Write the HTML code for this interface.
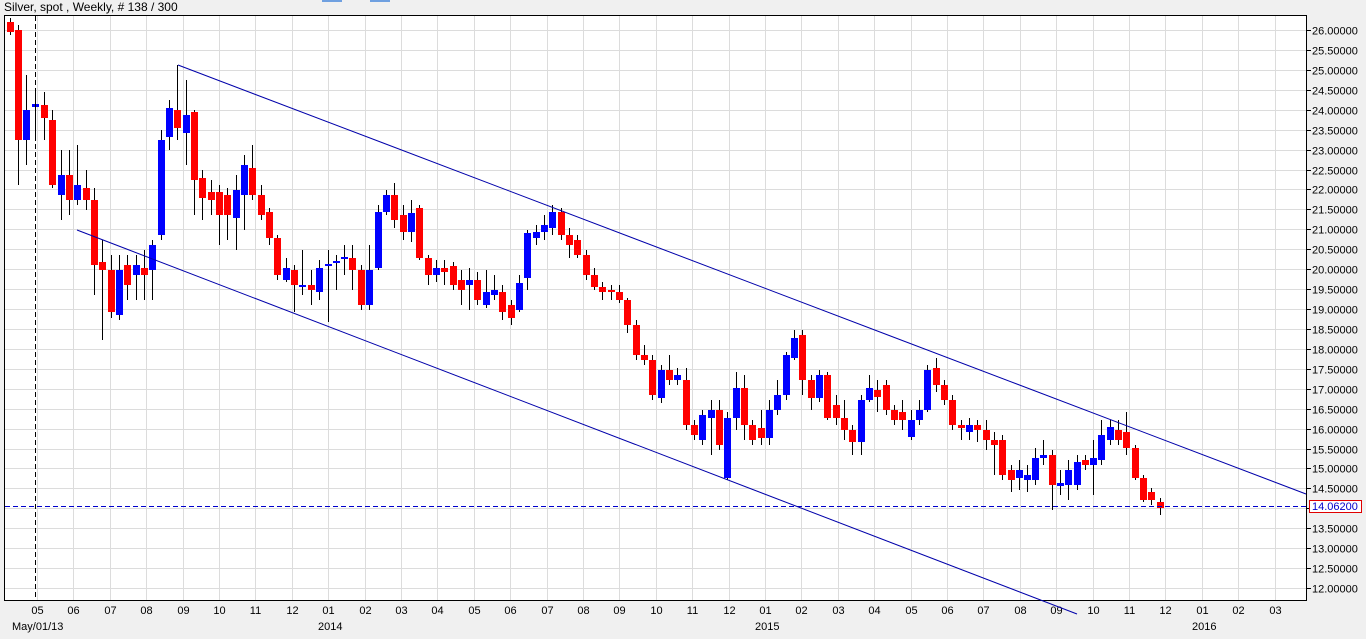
<!DOCTYPE html>
<html><head><meta charset="utf-8"><style>
html,body{margin:0;padding:0;background:#f0f0f0;width:1366px;height:639px;overflow:hidden;font-family:"Liberation Sans",sans-serif}
svg{position:absolute;left:0;top:0}
</style></head><body>
<svg id="s" width="1366" height="639" xmlns="http://www.w3.org/2000/svg" font-family="Liberation Sans, sans-serif"></svg>
<script>
var s='';
s+='<rect x="0" y="0" width="1366" height="639" fill="#f0f0f0"/>';
s+='<rect x="322" y="0" width="20" height="2" fill="#6fa0e0"/><rect x="370" y="0" width="20" height="2" fill="#6fa0e0"/>';
s+='<text x="4" y="11" font-size="12" fill="#000">Silver, spot , Weekly, # 138 / 300</text>';
s+='<rect x="4.5" y="15.5" width="1302" height="585" fill="#fff" stroke="#000" stroke-width="1"/>';
function Y(p){return 30+(26-p)*39.86;}
for(var i=0;i<=28;i++){var p=26-i*0.5;var y=Math.round(Y(p))+0.5;
 s+='<line x1="5" x2="1306" y1="'+y+'" y2="'+y+'" stroke="#dcdcdc"/>';
 s+='<line x1="1306" x2="1311" y1="'+y+'" y2="'+y+'" stroke="#000"/>';
 if(Math.abs(p-14)>0.01) s+='<text x="1312" y="'+(y+4)+'" font-size="11" fill="#000">'+p.toFixed(5)+'</text>';}
var m=['05','06','07','08','09','10','11','12','01','02','03','04','05','06','07','08','09','10','11','12','01','02','03','04','05','06','07','08','09','10','11','12','01','02','03'];
for(var i=0;i<m.length;i++){var x=Math.round(37+i*36.4)+0.5;
 s+='<line x1="'+x+'" x2="'+x+'" y1="16" y2="600" stroke="#dcdcdc"/>';}
var c=[[10,22,32,18,35,'r'],[18,30,140,25,185,'r'],[26,110,140,75,165,'b'],[35,104,107,88,140,'b'],[44,105,118,92,140,'r'],[52,120,185,110,188,'r'],[61,175,195,150,220,'b'],[69,175,200,150,215,'r'],[77,185,200,145,205,'b'],[86,188,200,170,210,'r'],[94,200,265,188,295,'r'],[102,262,270,240,340,'r'],[111,270,312,255,318,'r'],[119,270,315,255,320,'b'],[127,265,285,255,300,'r'],[136,265,275,255,300,'b'],[144,268,275,250,300,'r'],[152,245,270,240,300,'b'],[161,140,235,130,240,'b'],[169,108,137,100,150,'b'],[177,110,128,65,140,'r'],[186,115,133,80,165,'b'],[194,112,180,110,215,'r'],[202,178,198,170,220,'r'],[211,192,200,180,215,'r'],[219,192,215,185,245,'r'],[227,195,215,188,240,'r'],[236,190,218,175,250,'b'],[244,165,195,155,230,'b'],[252,168,195,145,200,'r'],[261,195,215,185,220,'r'],[269,212,238,208,245,'r'],[277,238,275,235,280,'r'],[286,268,280,258,282,'b'],[294,270,285,265,312,'r'],[302,285,287,250,295,'b'],[311,285,290,270,305,'r'],[319,268,292,260,300,'b'],[328,264,266,250,322,'b'],[336,261,263,255,290,'b'],[344,257,259,245,275,'b'],[352,258,270,245,290,'r'],[361,270,305,265,310,'r'],[369,270,305,245,310,'b'],[378,212,268,205,270,'b'],[386,195,212,190,215,'b'],[394,195,220,183,228,'r'],[403,215,232,205,240,'r'],[411,213,232,200,242,'b'],[419,208,258,205,260,'r'],[428,258,275,255,285,'r'],[436,268,275,260,282,'b'],[444,268,272,260,285,'r'],[453,266,285,262,290,'r'],[461,280,290,270,305,'r'],[469,280,285,268,310,'b'],[477,280,300,272,305,'r'],[486,292,305,270,308,'b'],[494,290,295,275,300,'b'],[502,292,312,285,320,'r'],[511,305,318,300,325,'r'],[519,283,310,275,312,'b'],[527,233,278,230,290,'b'],[536,232,238,225,245,'b'],[544,225,232,215,240,'b'],[552,212,228,205,235,'b'],[561,212,235,208,240,'r'],[569,235,245,228,258,'r'],[577,240,255,235,258,'r'],[586,255,275,250,280,'r'],[594,275,287,268,290,'r'],[602,287,292,282,300,'r'],[611,290,292,285,300,'r'],[619,292,300,285,303,'r'],[627,300,325,298,333,'r'],[636,325,355,320,360,'r'],[644,355,360,345,365,'r'],[652,360,395,355,400,'r'],[661,370,398,365,403,'b'],[669,370,380,355,385,'r'],[677,375,380,368,385,'b'],[686,380,425,368,430,'r'],[694,425,435,420,440,'r'],[702,415,440,410,445,'b'],[711,410,418,400,455,'b'],[719,410,445,400,450,'r'],[727,418,478,412,480,'b'],[736,388,418,372,430,'b'],[744,388,425,375,440,'r'],[752,425,440,420,445,'r'],[761,428,438,410,445,'r'],[769,410,438,400,445,'b'],[777,395,410,380,415,'b'],[786,355,395,352,400,'b'],[794,338,358,330,360,'b'],[802,335,380,330,395,'r'],[811,380,398,375,410,'r'],[819,375,398,370,402,'b'],[827,375,418,372,420,'r'],[836,405,418,395,425,'r'],[844,418,430,400,440,'r'],[852,430,442,425,455,'r'],[861,400,442,395,455,'b'],[869,388,400,375,402,'b'],[877,390,397,380,412,'r'],[886,385,410,380,415,'r'],[894,410,420,405,425,'r'],[902,412,420,400,430,'r'],[911,420,437,410,440,'b'],[919,410,420,400,425,'b'],[927,370,410,365,412,'b'],[936,368,385,358,392,'r'],[944,385,400,380,405,'r'],[952,400,425,395,430,'r'],[961,425,428,420,440,'r'],[969,425,432,418,440,'b'],[977,425,430,420,442,'r'],[986,430,440,420,450,'r'],[994,440,445,432,475,'r'],[1002,440,475,435,480,'r'],[1011,470,480,465,492,'r'],[1019,470,478,460,490,'b'],[1027,475,480,465,492,'b'],[1035,458,480,448,485,'b'],[1043,455,458,440,465,'b'],[1052,455,485,450,510,'r'],[1060,483,486,470,495,'b'],[1068,470,485,460,500,'b'],[1077,462,485,455,490,'b'],[1085,460,465,455,470,'r'],[1093,458,465,440,495,'b'],[1101,435,460,420,465,'b'],[1110,427,440,420,445,'b'],[1118,430,440,420,445,'r'],[1126,432,448,412,455,'r'],[1135,448,478,445,480,'r'],[1143,478,500,475,502,'r'],[1151,492,500,488,505,'r'],[1160,502,508,498,515,'r']];
for(var i=0;i<c.length;i++){var k=c[i];var col=k[5]=='r'?'#ff0000':'#0000ff';
 s+='<line x1="'+(k[0]+0.5)+'" x2="'+(k[0]+0.5)+'" y1="'+k[3]+'" y2="'+k[4]+'" stroke="#000"/>';
 var h=Math.max(2,k[2]-k[1]);
 s+='<rect x="'+(k[0]-3)+'" y="'+k[1]+'" width="7" height="'+h+'" fill="'+col+'"/>';}
s+='<line x1="178" y1="65" x2="1306" y2="494" stroke="#0000aa" stroke-width="1"/>';
s+='<line x1="5" x2="1306" y1="506.5" y2="506.5" stroke="#0000cc" stroke-dasharray="5,3"/>';
s+='<line x1="35.5" x2="35.5" y1="16" y2="600" stroke="#000" stroke-dasharray="5,3"/>';
s+='<rect x="0" y="601" width="1366" height="38" fill="#f0f0f0"/>';
for(var i=0;i<m.length;i++){var x=Math.round(37+i*36.4)+0.5;s+='<text x="'+x+'" y="614" font-size="11" text-anchor="middle" fill="#000">'+m[i]+'</text>';}
s+='<text x="12" y="630" font-size="11">May/01/13</text><text x="318" y="630" font-size="11">2014</text><text x="755" y="630" font-size="11">2015</text><text x="1192" y="630" font-size="11">2016</text>';
s+='<line x1="4" x2="1307" y1="600.5" y2="600.5" stroke="#000"/>';
s+='<line x1="77" y1="230" x2="1077" y2="614" stroke="#0000aa" stroke-width="1"/>';
s+='<rect x="1309.5" y="500.5" width="52" height="12" fill="#fff" stroke="#e00000"/>';
s+='<text x="1312" y="510" font-size="11" fill="#0000cc">14.06200</text>';
document.getElementById('s').innerHTML=s;
</script>
</body></html>
